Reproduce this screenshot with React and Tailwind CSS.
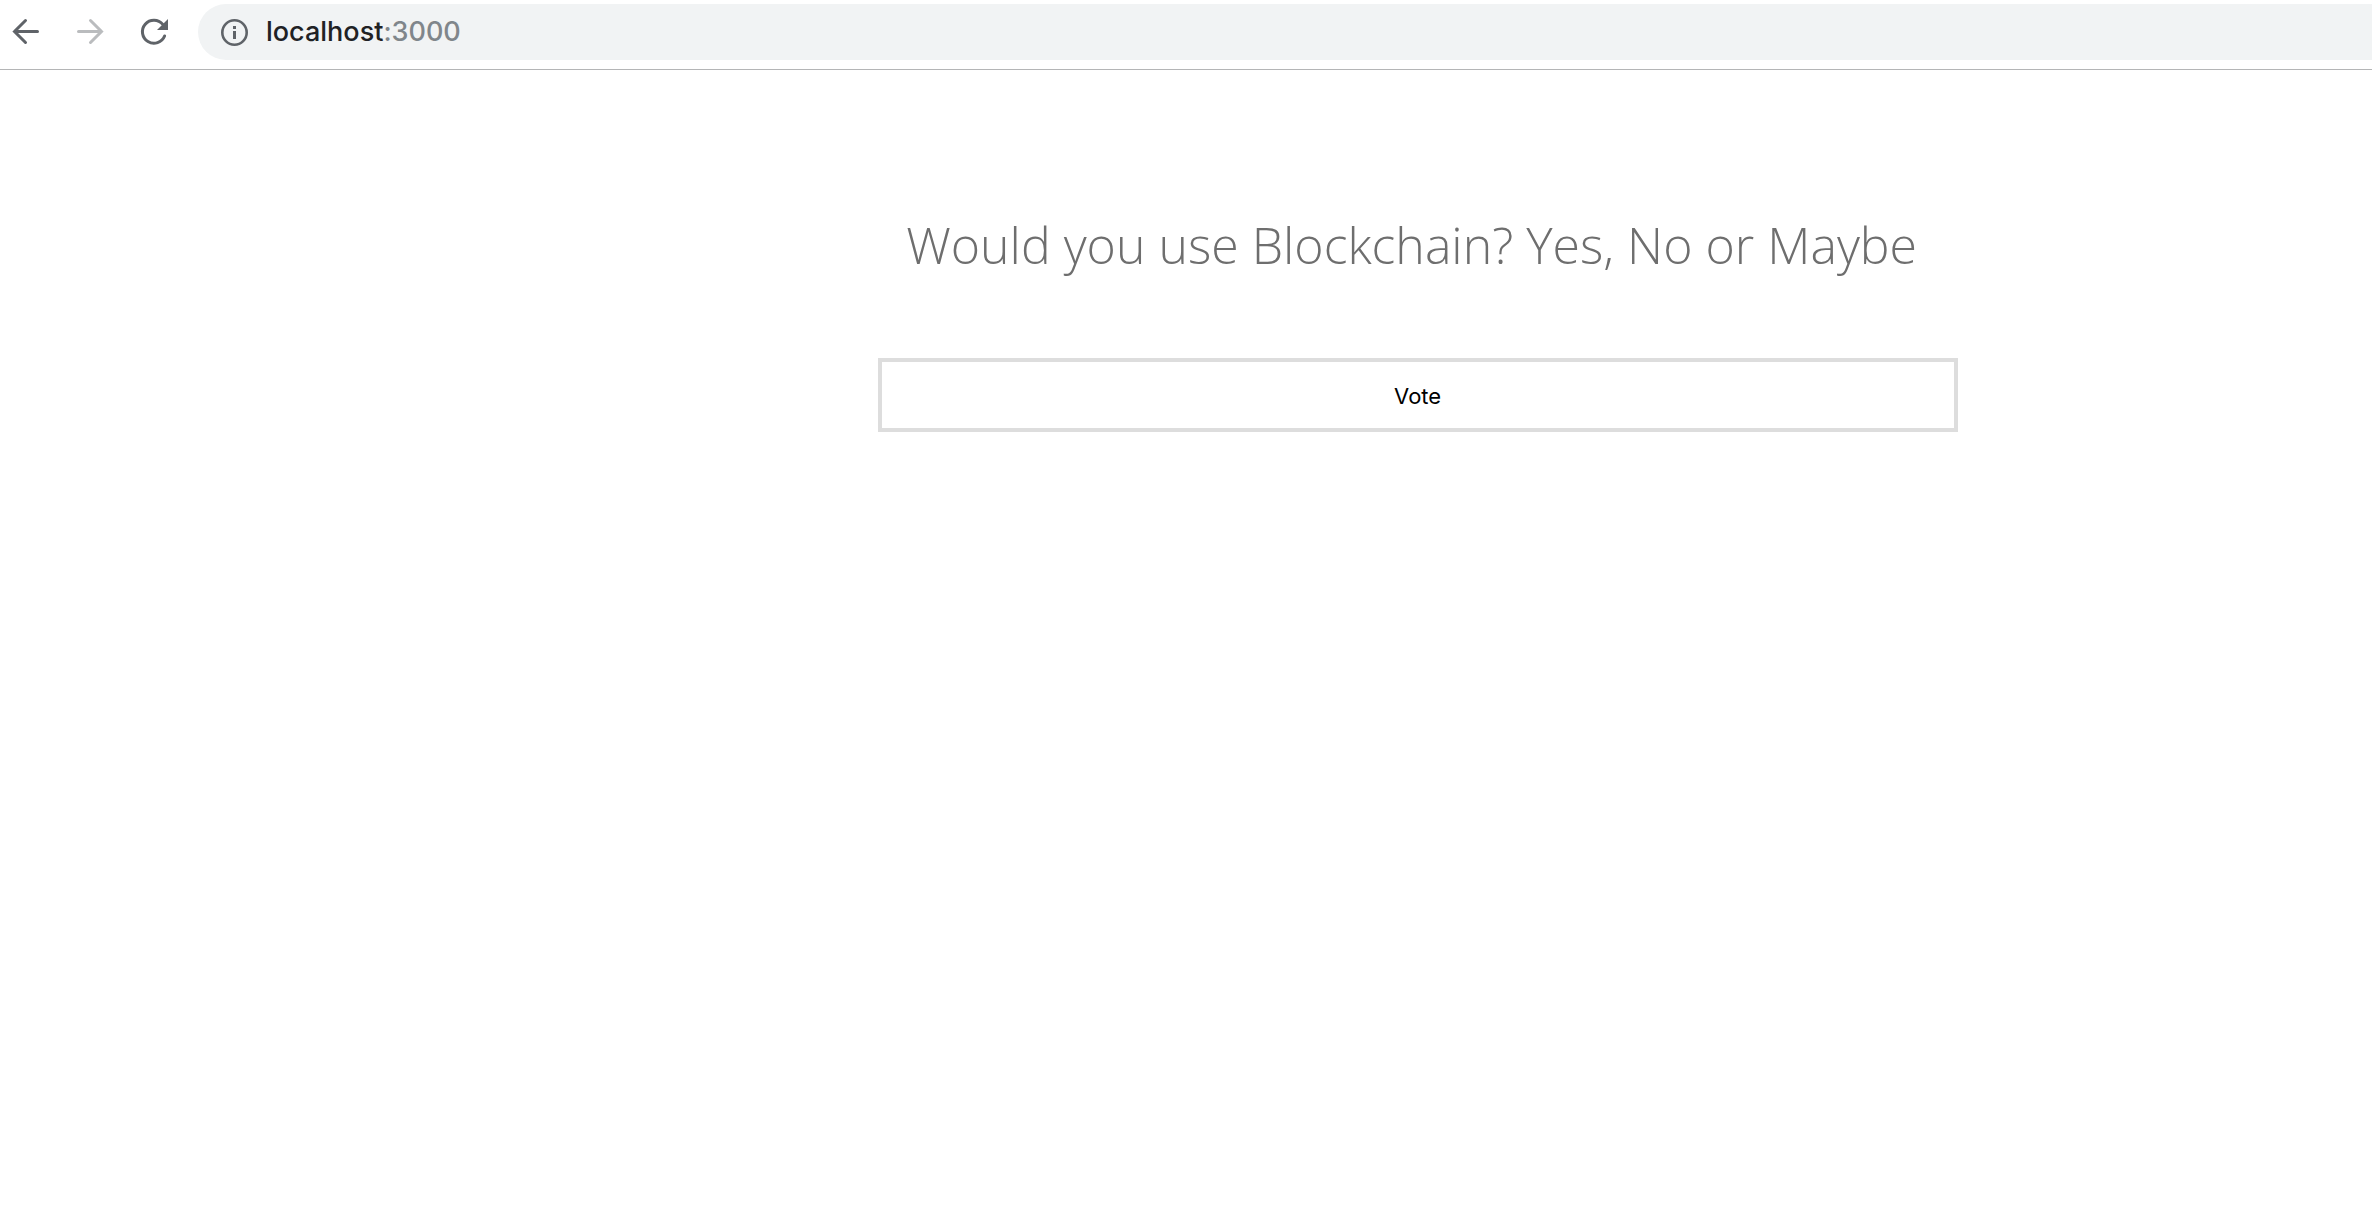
function BackIcon() {
  return (
    <svg viewBox="0 0 28 28" className="size-7" fill="none" stroke="currentColor" strokeWidth="3" strokeLinecap="round" aria-hidden="true">
      <path d="M2.5 13.5H25.5M13.5 2.5L2.5 13.5L13.5 24.5" />
    </svg>
  );
}

function ForwardIcon() {
  return (
    <svg viewBox="0 0 28 28" className="size-7" fill="none" stroke="currentColor" strokeWidth="3" strokeLinecap="round" aria-hidden="true">
      <path d="M2.5 13.5H25.5M14.5 2.5L25.5 13.5L14.5 24.5" />
    </svg>
  );
}

function ReloadIcon() {
  return (
    <svg viewBox="0 0 28 28" className="size-7" fill="none" aria-hidden="true">
      <path d="M24.6 18A11.5 11.5 0 1 1 22.8 6.4" stroke="currentColor" strokeWidth="3" strokeLinecap="round" />
      <path d="M28 1V12H17Z" fill="currentColor" />
    </svg>
  );
}

function InfoIcon() {
  return (
    <svg viewBox="0 0 28 28" className="size-7" fill="none" aria-hidden="true">
      <circle cx="14.5" cy="14.5" r="12.2" stroke="currentColor" strokeWidth="2.6" />
      <path d="M13 8H16V11H13ZM13 13H16V21H13Z" fill="currentColor" />
    </svg>
  );
}

export default function App() {
  return (
    <div className="min-h-screen overflow-hidden bg-white">
      <header className="flex h-[70px] items-start border-b border-[#b4b5b6] pt-1 pl-3">
        <nav className="flex h-14 items-center gap-9 text-[#5f6368]" aria-label="Browser">
          <button type="button" aria-label="Back"><BackIcon /></button>
          <button type="button" aria-label="Forward" className="text-[#babcbe]"><ForwardIcon /></button>
          <button type="button" aria-label="Reload"><ReloadIcon /></button>
        </nav>
        <div className="ml-[30px] flex h-14 flex-1 items-center rounded-l-full bg-[#f1f3f4] pl-[22px]">
          <button type="button" aria-label="Site information" className="text-[#5f6368]"><InfoIcon /></button>
          <a href="#" className="ml-[18px] font-['Inter',sans-serif] text-[27px] leading-8 font-medium text-[#202124]">
            localhost<span className="text-[#80868b]">:3000</span>
          </a>
        </div>
      </header>
      <main className="ml-[37%] w-[1080px] pt-[139px]">
        <h1 className="pr-3 text-center font-['Open_Sans',sans-serif] text-[50px] leading-[72px] font-light whitespace-nowrap text-[#6e6e6e]">
          Would you use Blockchain? Yes, No or Maybe
        </h1>
        <button type="button" className="mt-[77px] flex h-[74px] w-full items-center justify-center border-4 border-[#dddddd] bg-white pt-0.5 font-['Inter',sans-serif] text-[22px] leading-7 text-black">
          Vote
        </button>
      </main>
    </div>
  );
}
